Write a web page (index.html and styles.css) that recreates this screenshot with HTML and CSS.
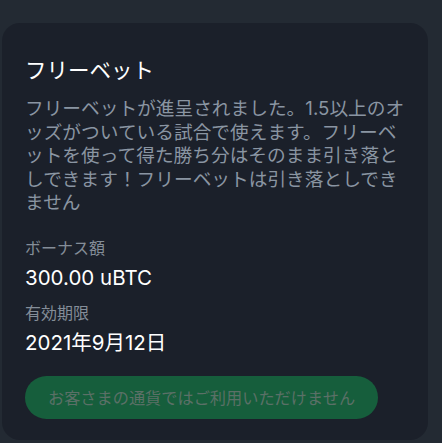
FILE: index.html
```html
<!DOCTYPE html>
<html lang="ja">
<head>
<meta charset="utf-8">
<link rel="stylesheet" href="styles.css">
</head>
<body>
<div class="card">
  <h2 class="title">フリーベット</h2>
  <p class="desc">フリーベットが進呈されました。1.5以上のオッズがついている試合で使えます。フリーベットを使って得た勝ち分はそのまま引き落としできます！フリーベットは引き落としできません</p>
  <div class="field">
    <div class="label">ボーナス額</div>
    <div class="value">300.00 uBTC</div>
  </div>
  <div class="field">
    <div class="label">有効期限</div>
    <div class="value">2021年9月12日</div>
  </div>
  <div class="actions">
    <button class="btn" disabled>お客さまの通貨ではご利用いただけません</button>
  </div>
</div>
</body>
</html>
```

FILE: styles.css
```css
html, body {
  margin: 0;
  padding: 0;
  background: #232a33;
  height: 100%;
}
body {
  font-family: Inter, "Noto Sans CJK JP", "Noto Sans", sans-serif;
  overflow: hidden;
}
.card {
  margin: 23px 0 0 2px;
  width: 426px;
  height: 417px;
  box-sizing: border-box;
  background: #1b202a;
  border-radius: 18px;
  padding: 33px 18px 0 23px;
}
.title {
  margin: 0;
  font-weight: 400;
  font-size: 21.5px;
  line-height: 28px;
  color: #ffffff;
}
.desc {
  margin: 13px 0 0 0;
  font-size: 18.7px;
  line-height: 23.5px;
  color: #8a95a2;
}
.field {
  margin-top: 22px;
}
.field + .field {
  margin-top: 11px;
}
.label {
  font-size: 16px;
  line-height: 22px;
  color: #848d98;
}
.value {
  margin-top: 6px;
  font-size: 20.5px;
  line-height: 26px;
  color: #ffffff;
}
.actions {
  margin-top: 20px;
}
.btn {
  height: 43px;
  padding: 0 23px;
  border: none;
  border-radius: 22px;
  background: #165e3c;
  color: #5b7067;
  font-family: Inter, "Noto Sans CJK JP", "Noto Sans", sans-serif;
  font-size: 16.2px;
  cursor: default;
}
```
